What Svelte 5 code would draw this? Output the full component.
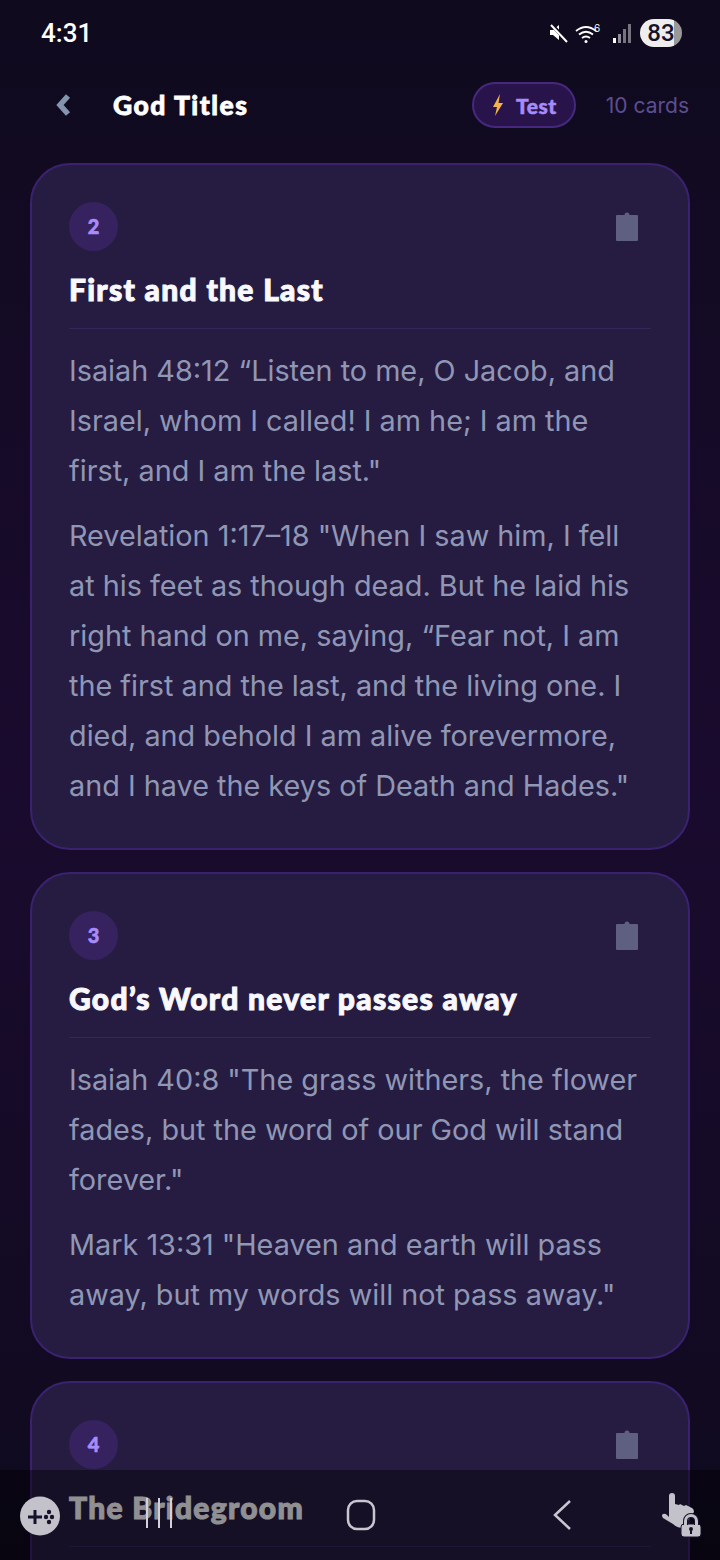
<script>
	const cards = [
		{
			n: 2,
			title: 'First and the Last',
			verses: [
				'Isaiah 48:12 “Listen to me, O Jacob, and Israel, whom I called! I am he; I am the first, and I am the last."',
				'Revelation 1:17–18 "When I saw him, I fell at his feet as though dead. But he laid his right hand on me, saying, “Fear not, I am the first and the last, and the living one. I died, and behold I am alive forevermore, and I have the keys of Death and Hades."'
			]
		},
		{
			n: 3,
			title: 'God’s Word never passes away',
			verses: [
				'Isaiah 40:8 "The grass withers, the flower fades, but the word of our God will stand forever."',
				'Mark 13:31 "Heaven and earth will pass away, but my words will not pass away."'
			]
		},
		{
			n: 4,
			title: 'The Bridegroom',
			verses: []
		}
	]
</script>

<div class="page">
	<div class="status">
		<span class="time">4:31</span>
		<div class="status-icons">
			<svg width="22" height="22" viewBox="0 0 22 22" fill="none">
				<path d="M2 8h3l6-5v15l-6-5H2z" fill="#fff" />
				<path d="M3 2l17 18" stroke="#0f0a1e" stroke-width="4" />
				<path d="M3 3l16 17" stroke="#fff" stroke-width="2" />
			</svg>
			<svg class="wifi" width="28" height="22" viewBox="0 0 28 22" fill="none" stroke="#fff" stroke-width="1.8">
				<path d="M1 9q10-8 20 0M4 12.500q7-5.500 14 0M7 16q4-3 8 0" />
				<circle cx="11" cy="19.500" r="1.500" fill="#fff" stroke="none" />
				<text x="19" y="10" fill="#fff" stroke="none" font-size="10" font-family="Inter, sans-serif">6</text>
			</svg>
			<svg width="20" height="22" viewBox="0 0 20 22">
				<rect x="1" y="16" width="3" height="5" fill="#fff" />
				<rect x="6" y="12" width="3" height="9" fill="#8f8c99" />
				<rect x="11" y="7" width="3" height="14" fill="#77747f" />
				<rect x="16" y="2" width="3" height="19" fill="#77747f" />
			</svg>
			<span class="battery">83</span>
		</div>
	</div>

	<header class="bar">
		<svg class="back" width="18" height="24" viewBox="0 0 18 24">
			<path d="M14 3L6 12l8 9" fill="none" stroke="#8494ad" stroke-width="5.500" />
		</svg>
		<h1>God Titles</h1>
		<button class="test">
			<svg width="14" height="24" viewBox="0 0 14 24">
				<path d="M9 1L2 14h4l-2 9 8-13H7.500z" fill="#f5b14c" />
			</svg>
			Test
		</button>
		<span class="count">10 cards</span>
	</header>

	<div class="cards">
		{#each cards as card}
			<section class="card">
				<div class="top">
					<span class="num">{card.n}</span>
					<svg width="22" height="30" viewBox="0 0 22 30">
						<path d="M1 4h7.500a2.500 2.500 0 0 1 5 0H21q1 0 1 1v24q0 1-1 1H1q-1 0-1-1V5q0-1 1-1z" fill="#5f5f82" />
					</svg>
				</div>
				<h2>{card.title}</h2>
				<div class="verses">
					{#each card.verses as v}
						<p>{v}</p>
					{/each}
				</div>
			</section>
		{/each}
	</div>

	<nav class="sys">
		<svg class="game" width="42" height="40" viewBox="0 0 42 40">
			<ellipse cx="21" cy="20" rx="20" ry="19.500" fill="#c3c1ca" />
			<path d="M9 21h14M16 14v14" stroke="#17122a" stroke-width="3" />
			<circle cx="33" cy="21" r="2.200" fill="#17122a" />
			<circle cx="27" cy="21" r="2.200" fill="#17122a" />
			<circle cx="30" cy="16" r="2.200" fill="#17122a" />
			<circle cx="30" cy="26" r="2.200" fill="#17122a" />
		</svg>
		<svg class="recents" width="26" height="32" viewBox="0 0 26 32" stroke="#d2d0d8" stroke-width="2">
			<path d="M1 1v30M13 1v30M25 1v30" />
		</svg>
		<svg class="home" width="30" height="32" viewBox="0 0 30 32">
			<rect x="2" y="2" width="26" height="28" rx="9" fill="none" stroke="#c8c6d0" stroke-width="2.500" />
		</svg>
		<svg class="prev" width="20" height="32" viewBox="0 0 20 32">
			<path d="M18 2L3 16l15 14" fill="none" stroke="#c8c6d0" stroke-width="2.500" />
		</svg>
		<svg class="lock" width="42" height="46" viewBox="0 0 42 46">
			<path d="M9 4a3 3 0 0 1 6 0v8l4 1 1-1 4 2 2-1 6 3q2 1 2 4l-6 8-5 8q-6 0-10-4L3 26q-2-3 0-4 2-1 4 1l2 2z" fill="#c3c1ca" />
			<rect x="21" y="32" width="20" height="13" rx="3" fill="#c3c1ca" stroke="#17122a" stroke-width="1" />
			<path d="M25.500 33v-4a5.500 5.500 0 0 1 11 0v4" fill="none" stroke="#17122a" stroke-width="5" />
			<path d="M25.500 33v-4a5.500 5.500 0 0 1 11 0v4" fill="none" stroke="#c3c1ca" stroke-width="3" />
			<circle cx="31" cy="37" r="2" fill="#17122a" />
			<path d="M31 37v5" stroke="#17122a" stroke-width="2" />
		</svg>
	</nav>
</div>

<style>
	:global(body) {
		margin: 0;
		background: #0f0a1e;
	}

	.page {
		position: relative;
		width: 720px;
		height: 1560px;
		overflow: hidden;
		font-family: Inter, sans-serif;
		background: linear-gradient(180deg, #0f0a1e 0%, #1a0b2e 50%, #0f0a1e 100%);
	}

	.status {
		height: 66px;
		box-sizing: border-box;
		padding: 0 38px 0 41px;
		display: flex;
		align-items: center;
		justify-content: space-between;
	}

	.time {
		font: 500 26px Roboto, sans-serif;
		color: #fff;
	}

	.status-icons {
		display: flex;
		align-items: center;
		gap: 8px;
	}

	.wifi {
		margin-left: -3px;
		margin-right: 1px;
	}

	.battery {
		width: 42px;
		height: 28px;
		border-radius: 14px;
		background: linear-gradient(90deg, #eee 0%, #eee 80%, #999 80%);
		color: #17122a;
		font: 500 24px/28px Roboto, sans-serif;
		text-align: center;
	}

	.bar {
		height: 78px;
		box-sizing: border-box;
		padding: 0 31px 0 54px;
		display: flex;
		align-items: center;
	}

	.back {
		margin-right: 41px;
	}

	h1 {
		margin: 0;
		flex: 1;
		font: 900 26.500px Lato, sans-serif;
		letter-spacing: 1.500px;
		color: #fff;
		-webkit-text-stroke: 0.8px #fff;
	}

	.test {
		height: 46px;
		width: 104px;
		box-sizing: border-box;
		display: flex;
		align-items: center;
		justify-content: center;
		gap: 11px;
		padding: 0;
		border: 2px solid #46297f;
		border-radius: 23px;
		background: #28144a;
		color: #a78bfa;
		font: 900 21px Lato, sans-serif;
		letter-spacing: 0.5px;
		-webkit-text-stroke: 0.5px #a78bfa;
	}

	.count {
		margin-left: 30px;
		font-size: 21px;
		color: #5c4e90;
	}

	.cards {
		margin-top: 19px;
		padding: 0 30px;
		display: flex;
		flex-direction: column;
		gap: 22px;
	}

	.card {
		box-sizing: border-box;
		padding: 37px;
		border: 2px solid #3b2270;
		border-radius: 40px;
		background: #261c42;
	}

	.top {
		display: flex;
		align-items: center;
		justify-content: space-between;
	}

	.top svg {
		margin: 0 13px 2px 0;
	}

	.num {
		width: 49px;
		height: 49px;
		border-radius: 50%;
		background: #35225f;
		color: #a78bfa;
		font: 900 20px/49px Lato, sans-serif;
		text-align: center;
		-webkit-text-stroke: 0.6px #a78bfa;
	}

	h2 {
		margin: 0;
		padding: 18px 0 19px;
		border-bottom: 1px solid #33265a;
		font: 900 30px/40px Lato, sans-serif;
		letter-spacing: 1.300px;
		color: #f8f8fd;
		-webkit-text-stroke: 1px #f8f8fd;
	}

	.verses {
		padding-top: 17px;
	}

	p {
		margin: 0 0 15px;
		font-size: 28.800px;
		line-height: 50px;
		color: #9097b5;
	}

	p:last-child {
		margin-bottom: 0;
	}

	.sys {
		position: absolute;
		left: 0;
		right: 0;
		bottom: 0;
		height: 90px;
		background: rgba(0, 0, 0, 0.42);
	}

	.sys svg {
		position: absolute;
	}

	.game {
		left: 19px;
		top: 26px;
	}

	.recents {
		left: 146px;
		top: 27px;
	}

	.home {
		left: 346px;
		top: 29px;
	}

	.prev {
		left: 552px;
		top: 29px;
	}

	.lock {
		left: 660px;
		top: 22px;
	}
</style>
